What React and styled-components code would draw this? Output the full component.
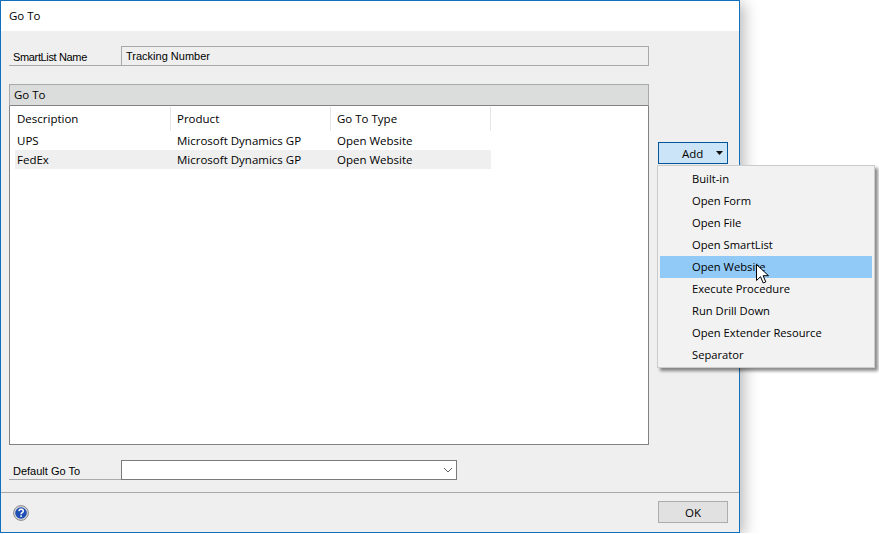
import React from 'react';
import styled, { createGlobalStyle } from 'styled-components';

const GlobalStyle = createGlobalStyle`
  html, body { margin: 0; padding: 0; background: #fff; overflow: hidden; }
  body { font-family: "Open Sans", "Noto Sans", sans-serif; font-size: 11.5px; color: #000; }
  * { box-sizing: border-box; }
`;

const Window = styled.div`
  display: flex; flex-direction: column;
  width: 740px; height: 533px;
  background: #efefef;
  border: 1px solid #1170bb;
  box-shadow: 4px 3px 14px rgba(0, 0, 0, .28);
`;

const TitleBar = styled.div`
  display: flex; align-items: center;
  height: 30px; padding: 0 0 1px 8px;
  background: #fff;
`;

const Content = styled.div`
  flex: 1;
  display: flex;
  gap: 9px;
  padding-left: 8px;
`;

const MainColumn = styled.div`
  width: 640px;
  display: flex; flex-direction: column;
  padding-top: 15px;
`;

const SideColumn = styled.div`
  width: 70px;
  padding-top: 111px;
`;

const FieldRow = styled.div`
  display: flex;
  height: 20px;
  margin-top: ${p => p.$top || 0}px;
`;

const FieldLabel = styled.div`
  width: 112px;
  padding: 3px 0 0 4px;
  font-family: "Liberation Sans", Arial, sans-serif;
  font-size: 11px;
  line-height: 16px;
  letter-spacing: ${p => p.$tight ? '-0.35px' : 'normal'};
  border-bottom: 1px solid #a9a9ad;
`;

const ReadOnlyInput = styled.div`
  flex: 1;
  padding-left: 4px;
  font-family: "Liberation Sans", Arial, sans-serif;
  font-size: 11px;
  line-height: 18px;
  border: 1px solid #a9a9ad;
`;

const Group = styled.section`
  height: 361px;
  margin-top: 18px;
  display: flex; flex-direction: column;
`;

const GroupHeader = styled.div`
  height: 22px;
  padding: 1px 0 0 4px;
  line-height: 18px;
  background: #dbdcdc;
  border: 1px solid #a9a9ad;
  border-bottom-color: #808285;
`;

const ListBox = styled.div`
  flex: 1;
  padding: 1px 0 0 5px;
  background: #fff;
  border: 1px solid #808285;
  border-top: 0;
`;

const ListRow = styled.div`
  display: grid;
  grid-template-columns: 156px 160px 160px;
  width: 476px;
  height: ${p => p.$head ? 24 : 19}px;
  background: ${p => p.$shaded ? '#efefef' : 'transparent'};
`;

const Cell = styled.div`
  padding-left: 6px;
  line-height: ${p => p.$head ? 23 : 19}px;
  white-space: nowrap;
  &:first-child { padding-left: 2px; }
  ${p => p.$head && 'border-right: 1px solid #e5e5e5;'}
`;

const ComboBox = styled.div`
  width: 336px;
  display: flex; align-items: center; justify-content: flex-end;
  padding-right: 3px;
  background: #fff;
  border: 1px solid #7a7a7a;
`;

const Divider = styled.div`
  height: 1px;
  background: #a9a9ad;
`;

const Footer = styled.div`
  height: 39px;
  display: flex; align-items: center; justify-content: space-between;
  padding: 0 11px 1px 12px;
`;

const HelpIcon = styled.svg`
  margin-top: 2px;
`;

const OkButton = styled.button`
  width: 70px; height: 22px;
  padding: 0;
  font: inherit; color: inherit;
  background: #e1e1e1;
  border: 1px solid #adadad;
`;

const AddWrap = styled.div`
  position: relative;
`;

const AddButton = styled.button`
  width: 70px; height: 22px;
  display: flex; align-items: center;
  padding: 0 0 0 23px;
  font: inherit; color: inherit;
  background: #cce4f7;
  border: 1px solid #005499;
  svg { margin-left: 13px; flex: none; }
`;

const Menu = styled.ul`
  position: absolute;
  top: 23px; left: -1px;
  width: 218px;
  margin: 0;
  padding: 2px 2px 1px;
  list-style: none;
  font-size: 11.2px;
  background: #f2f2f2;
  border: 1px solid #ccc;
  box-shadow: 3px 3px 3px rgba(0, 0, 0, .45);
  z-index: 2;
`;

const MenuItem = styled.li`
  position: relative;
  height: 22px;
  padding-left: 32px;
  line-height: 21px;
  background: ${p => p.$active ? '#91c9f7' : 'transparent'};
`;

const Pointer = styled.svg`
  position: absolute;
  left: 96px; top: 8px;
`;

const menuItems = ['Built-in', 'Open Form', 'Open File', 'Open SmartList', 'Open Website', 'Execute Procedure', 'Run Drill Down', 'Open Extender Resource', 'Separator'];

const rows = [
  { id: 'UPS', shaded: false },
  { id: 'FedEx', shaded: true },
];

export default function App() {
  return <>
    <GlobalStyle />
    <Window>
      <TitleBar>Go To</TitleBar>
      <Content>
        <MainColumn>
          <FieldRow>
            <FieldLabel $tight>SmartList Name</FieldLabel>
            <ReadOnlyInput>Tracking Number</ReadOnlyInput>
          </FieldRow>
          <Group>
            <GroupHeader>Go To</GroupHeader>
            <ListBox>
              <ListRow $head>
                <Cell $head>Description</Cell>
                <Cell $head>Product</Cell>
                <Cell $head>Go To Type</Cell>
              </ListRow>
              {rows.map(r => (
                <ListRow key={r.id} $shaded={r.shaded}>
                  <Cell>{r.id}</Cell>
                  <Cell>Microsoft Dynamics GP</Cell>
                  <Cell>Open Website</Cell>
                </ListRow>
              ))}
            </ListBox>
          </Group>
          <FieldRow $top={15}>
            <FieldLabel>Default Go To</FieldLabel>
            <ComboBox>
              <svg width="10" height="6" viewBox="0 0 10 6">
                <path d="M1 1l4 4 4-4" fill="none" stroke="#606060" strokeWidth="1" />
              </svg>
            </ComboBox>
          </FieldRow>
        </MainColumn>
        <SideColumn>
          <AddWrap>
            <AddButton>
              Add
              <svg width="7" height="4" viewBox="0 0 7 4"><path d="M0 0h7L3.5 4z" fill="#111" /></svg>
            </AddButton>
            <Menu>
              {menuItems.map(item => (
                <MenuItem key={item} $active={item === 'Open Website'}>
                  {item}
                  {item === 'Open Website' && (
                    <Pointer width="13" height="20" viewBox="0 0 13 20">
                      <path d="M.5.5v16l4-3.8 2.7 6.3 2.6-1.1-2.7-6.2h5.4z" fill="#fff" stroke="#000" strokeWidth="1" strokeLinejoin="round" />
                    </Pointer>
                  )}
                </MenuItem>
              ))}
            </Menu>
          </AddWrap>
        </SideColumn>
      </Content>
      <Divider />
      <Footer>
        <HelpIcon width="16" height="16" viewBox="0 0 16 16">
          <circle cx="8" cy="8" r="7.4" fill="#d8d8d8" stroke="#8a8a8a" />
          <circle cx="8" cy="8" r="5.8" fill="#1f4fb4" />
          <path d="M5.8 6.2c.2-1.3 1.2-1.9 2.3-1.9 1.3 0 2.2.8 2.2 1.8 0 1.6-2.2 1.6-2.2 3.1" fill="none" stroke="#fff" strokeWidth="1.5" />
          <rect x="7.3" y="10.3" width="1.6" height="1.6" fill="#fff" />
        </HelpIcon>
        <OkButton>OK</OkButton>
      </Footer>
    </Window>
  </>;
}
